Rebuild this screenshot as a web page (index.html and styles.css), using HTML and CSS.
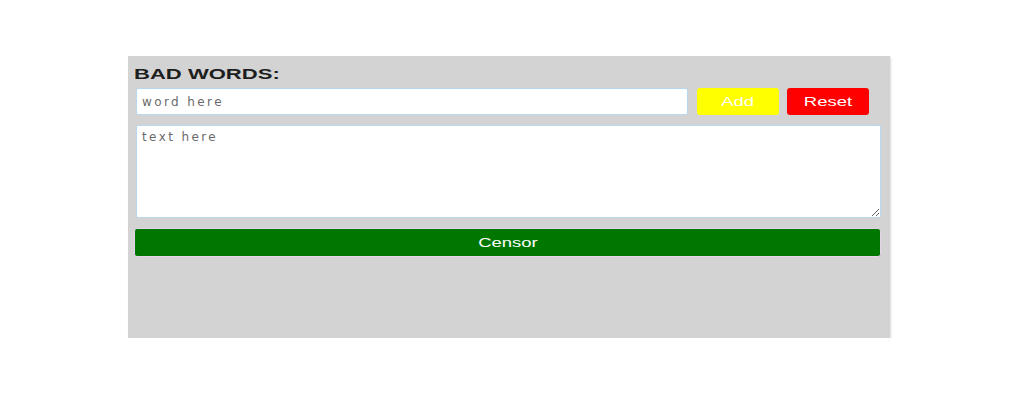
FILE: index.html
```html
<!DOCTYPE html>
<html>
<head>
<meta charset="utf-8">
<link rel="stylesheet" href="styles.css">
</head>
<body>
<div class="page">
  <div class="panel">
    <div class="label"><span class="wide">BAD WORDS:</span></div>
    <div class="row">
      <input class="word" type="text" placeholder="word here">
      <button class="btn add"><span class="wide-c">Add</span></button>
      <button class="btn reset"><span class="wide-c">Reset</span></button>
    </div>
    <textarea class="text" placeholder="text here"></textarea>
    <button class="censor"><span class="wide-c">Censor</span></button>
  </div>
</div>
</body>
</html>
```

FILE: styles.css
```css
html, body {
  margin: 0;
  padding: 0;
  background: #fff;
  font-family: "Liberation Sans", Arial, sans-serif;
}
.page {
  padding: 56px 0 0 128px;
}
.panel {
  width: 762px;
  height: 282px;
  box-sizing: border-box;
  background: #d3d3d3;
  box-shadow: 1px 1px 2px rgba(0,0,0,0.15);
  padding: 9px 7px 0 6px;
  display: flex;
  flex-direction: column;
}
.label {
  font-size: 15px;
  font-weight: bold;
  color: #1e1e1e;
  line-height: 17px;
  height: 23px;
}
.wide {
  display: inline-block;
  transform: scaleX(1.47);
  transform-origin: left center;
}
.wide-c {
  display: inline-block;
  transform: scaleX(1.42);
  transform-origin: center center;
}
.row {
  display: flex;
  align-items: center;
  height: 27px;
}
.word {
  width: 552px;
  height: 27px;
  box-sizing: border-box;
  margin-left: 2px;
  border: 1px solid #b7d8ee;
  border-radius: 2px;
  padding: 0 5px;
  font-family: "DejaVu Sans", Verdana, sans-serif;
  font-size: 12px;
  letter-spacing: 2.4px;
  color: #333;
  outline: none;
  margin-right: 9px;
}
.word::placeholder, .text::placeholder {
  color: #6a6a6a;
}
.btn {
  width: 82px;
  height: 27px;
  border: none;
  border-radius: 3px;
  color: #fff;
  font-family: "Liberation Sans", Arial, sans-serif;
  font-size: 13px;
  padding: 0;
}
.add {
  background: #ffff00;
  margin-right: 8px;
}
.reset {
  background: #ff0000;
}
.text {
  margin-top: 10px;
  margin-left: 2px;
  width: 745px;
  height: 93px;
  box-sizing: border-box;
  border: 1px solid #b7d8ee;
  border-radius: 2px;
  padding: 4px 5px;
  font-family: "DejaVu Sans", Verdana, sans-serif;
  font-size: 12px;
  letter-spacing: 2.4px;
  color: #333;
  outline: none;
  resize: vertical;
  display: block;
}
.censor {
  margin-top: 10px;
  width: 747px;
  height: 29px;
  background: #007700;
  border: 1px solid #e6d4ea;
  border-radius: 3px;
  color: #fff;
  font-family: "Liberation Sans", Arial, sans-serif;
  font-size: 13px;
  padding: 0;
}
```
